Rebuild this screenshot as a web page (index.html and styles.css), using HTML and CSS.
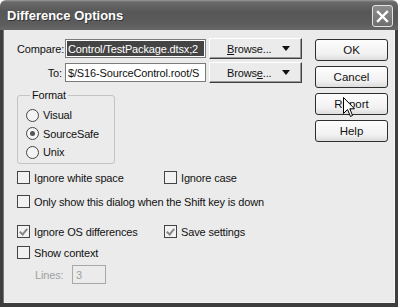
FILE: index.html
```html
<!DOCTYPE html>
<html lang="en">
<head>
    <meta charset="UTF-8">
    <title>Difference Options</title>
    <link rel="stylesheet" href="styles.css">
</head>
<body>

<div class="window">
    <div class="titlebar">
        <span class="title">Difference Options</span>
        <span class="close">
            <svg width="13" height="13" viewBox="0 0 13 13"><path d="M2 2 L11 11 M11 2 L2 11" stroke="#fff" stroke-width="2.4" stroke-linecap="square"/></svg>
        </span>
    </div>

    <div class="body">
        <div class="main">
            <div class="file-row">
                <label class="file-label">Compare:</label>
                <div class="field selected"><span>Control/TestPackage.dtsx;2</span></div>
                <div class="browse"><span><u>B</u>rowse...</span><span class="arrow"></span></div>
            </div>
            <div class="file-row">
                <label class="file-label">To:</label>
                <div class="field"><span>$/S16-SourceControl.root/S</span></div>
                <div class="browse"><span>Brows<u>e</u>...</span><span class="arrow"></span></div>
            </div>

            <fieldset class="group">
                <legend>Format</legend>
                <div class="radio"><span class="circle"></span>Visual</div>
                <div class="radio"><span class="circle on"></span>SourceSafe</div>
                <div class="radio"><span class="circle"></span>Unix</div>
            </fieldset>

            <div class="check-row first">
                <div class="check"><span class="box"></span>Ignore white space</div>
                <div class="check col2"><span class="box"></span>Ignore case</div>
            </div>
            <div class="check-row">
                <div class="check"><span class="box"></span>Only show this dialog when the Shift key is down</div>
            </div>
            <div class="check-row gap">
                <div class="check"><span class="box checked"></span>Ignore OS differences</div>
                <div class="check col2"><span class="box checked"></span>Save settings</div>
            </div>
            <div class="check-row tight">
                <div class="check"><span class="box"></span>Show context</div>
            </div>
            <div class="lines-row">
                <span class="lines-label">Lines:</span>
                <span class="lines-field">3</span>
            </div>
        </div>

        <div class="actions">
            <button>OK</button>
            <button>Cancel</button>
            <button>Report</button>
            <button>Help</button>
        </div>
    </div>

    <!-- mouse pointer over the Report button -->
    <svg class="cursor" width="13" height="21" viewBox="0 0 13 21">
        <path d="M0.5 0.5 L0.5 16.5 L4.5 12.5 L7.5 19.5 L9.5 18.5 L6.8 11.8 L11.5 11.8 Z" fill="#fff" stroke="#000" stroke-width="1"/>
    </svg>
</div>

</body>
</html>
```

FILE: styles.css
```css
body {
    margin: 0;
    background-color: #fff;
    font-family: "Liberation Sans", Arial, sans-serif;
    font-size: 11px;
    letter-spacing: -0.15px;
    color: #111;
}
.window {
    position: relative;
    width: 398px;
    height: 307px;
    display: flex;
    flex-direction: column;
}
.titlebar {
    height: 30px;
    flex: none;
    display: flex;
    align-items: center;
    justify-content: space-between;
    padding: 0 5px 0 7px;
    box-sizing: border-box;
    border-radius: 6px 6px 0 0;
    background: linear-gradient(#9a9a9a 0, #6a6a6a 2px, #575757 40%, #5c5c5c 80%, #686868 100%);
}
.title {
    color: #fff;
    font-weight: bold;
    font-size: 13px;
    letter-spacing: 0;
    text-shadow: 1px 1px 0 #333;
    margin-top: 1px;
}
.close {
    width: 19px;
    height: 20px;
    border: 1px solid #e2e2e2;
    border-radius: 3px;
    background: linear-gradient(#8c8c8c, #6e6e6e);
    display: flex;
    align-items: center;
    justify-content: center;
    margin-top: 2px;
}
.body {
    flex: 1;
    display: flex;
    background-color: #ebebeb;
    border-left: 3px solid #3e3e3e;
    border-right: 3px solid #3e3e3e;
    border-bottom: 4px solid #3e3e3e;
    box-shadow: inset 1px 0 0 #777, inset -1px 0 0 #f4f4f4, inset 0 -1px 0 #f4f4f4;
}
.main {
    width: 308px;
    padding: 8px 0 0 14px;
    box-sizing: border-box;
}
.file-row {
    display: grid;
    grid-template-columns: 46px 141px 94px;
    column-gap: 2px;
    height: 21px;
    align-items: center;
    margin-bottom: 3px;
}
.file-label {
    text-align: right;
    padding-right: 1px;
}
.field {
    height: 19px;
    border: 1px solid #7a7a7a;
    background-color: #fff;
    box-sizing: border-box;
    display: flex;
    align-items: center;
    padding-left: 2px;
    white-space: nowrap;
    overflow: hidden;
}
.field.selected {
    background-color: #444;
    color: #fff;
    box-shadow: inset 0 0 0 1px #fff;
}
.browse {
    height: 21px;
    margin-left: 1px;
    box-sizing: border-box;
    border: 1px solid;
    border-color: #fff #404040 #404040 #fff;
    box-shadow: inset -1px -1px 0 #999;
    display: flex;
    align-items: center;
    padding-left: 17px;
}
.arrow {
    margin-left: 10px;
    width: 0;
    height: 0;
    border-left: 4px solid transparent;
    border-right: 4px solid transparent;
    border-top: 5px solid #111;
}
.group {
    width: 98px;
    box-sizing: border-box;
    margin: 6px 0 0 0;
    padding: 4px 0 1px 8px;
    border: 1px solid #c4c4c4;
    border-radius: 3px;
}
.group legend {
    padding: 0 2px;
    margin-left: 4px;
    height: 13px;
    line-height: 13px;
}
.radio {
    display: flex;
    align-items: center;
    height: 18.5px;
}
.circle {
    width: 11px;
    height: 11px;
    border: 1px solid #444;
    border-radius: 50%;
    background-color: #f4f4f4;
    margin-right: 4px;
    position: relative;
}
.circle.on::after {
    content: "";
    position: absolute;
    left: 3px;
    top: 3px;
    width: 5px;
    height: 5px;
    border-radius: 50%;
    background-color: #555;
}
.check-row {
    display: flex;
    height: 16px;
    align-items: center;
    margin-top: 8px;
}
.check-row.first {
    margin-top: 6px;
}
.check-row.gap {
    margin-top: 14px;
}
.check-row.tight {
    margin-top: 5px;
}
.check {
    display: flex;
    align-items: center;
    width: 151px;
    white-space: nowrap;
}
.box {
    width: 11px;
    height: 11px;
    border: 1px solid #444;
    background-color: #f2f2f2;
    margin-right: 4px;
    position: relative;
    flex: none;
}
.box.checked::after {
    content: "";
    position: absolute;
    left: 3px;
    top: 1px;
    width: 3px;
    height: 6px;
    border: solid #888;
    border-width: 0 2px 2px 0;
    transform: rotate(40deg);
}
.lines-row {
    display: flex;
    align-items: center;
    padding-left: 18px;
    margin-top: 4px;
    height: 20px;
    color: #a0a0a0;
}
.lines-label {
    width: 37px;
}
.lines-field {
    width: 34px;
    height: 19px;
    box-sizing: border-box;
    border: 1px solid #a8a8a8;
    padding-left: 3px;
    display: flex;
    align-items: center;
}
.actions {
    display: flex;
    flex-direction: column;
    gap: 5px;
    padding: 9px 0 0 4px;
}
.actions button {
    width: 73px;
    height: 22px;
    border: 1px solid #2e2e2e;
    border-radius: 3px;
    background: linear-gradient(#fdfdfd, #f1f1f1 70%, #dcdcdc);
    font-family: "Liberation Sans", Arial, sans-serif;
    font-size: 11.5px;
    color: #111;
    padding: 0;
}
.cursor {
    position: absolute;
    left: 343px;
    top: 97px;
}
```
